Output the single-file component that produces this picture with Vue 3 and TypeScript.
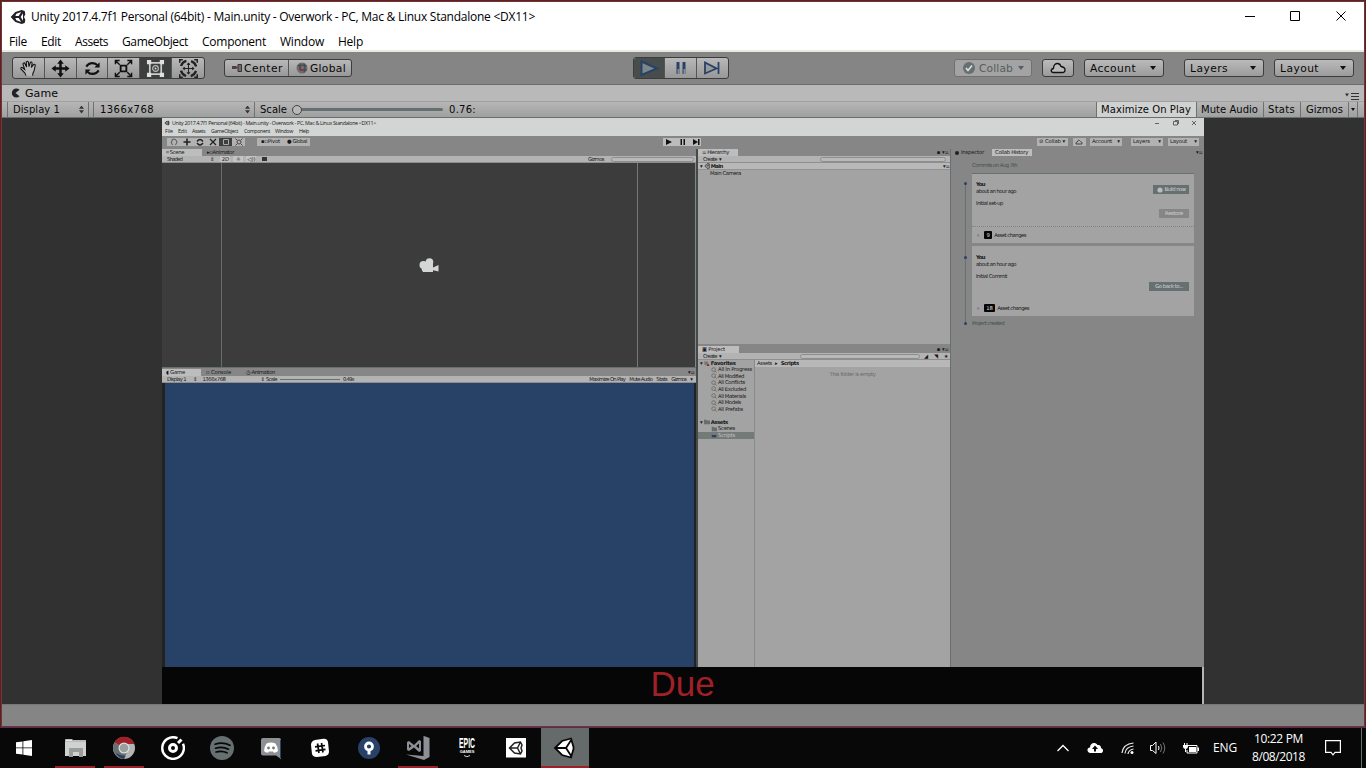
<script setup lang="ts">
import type { Directive } from 'vue'

// Spreads the letters of a label over a given width in pixels.
const vFit: Directive<HTMLElement, number> = {
  mounted(el, binding) {
    const count = (el.textContent ?? '').length
    const natural = el.getBoundingClientRect().width
    if (count > 0) el.style.letterSpacing = `${(binding.value - natural) / count}px`
  }
}

interface Label {
  text: string
  width: number
}

const title = 'Unity 2017.4.7f1 Personal (64bit) - Main.unity - Overwork - PC, Mac & Linux Standalone <DX11>'

const menu: Label[] = [
  { text: 'File', width: 18 },
  { text: 'Edit', width: 20 },
  { text: 'Assets', width: 33 },
  { text: 'GameObject', width: 66 },
  { text: 'Component', width: 64 },
  { text: 'Window', width: 44 },
  { text: 'Help', width: 25 }
]

const innerMenu: Label[] = [
  { text: 'File', width: 8 },
  { text: 'Edit', width: 9 },
  { text: 'Assets', width: 13 },
  { text: 'GameObject', width: 27 },
  { text: 'Component', width: 26 },
  { text: 'Window', width: 18 },
  { text: 'Help', width: 10 }
]

const favorites: Label[] = [
  { text: 'All In Progress', width: 34 },
  { text: 'All Modified', width: 26 },
  { text: 'All Conflicts', width: 27 },
  { text: 'All Excluded', width: 28 },
  { text: 'All Materials', width: 28 },
  { text: 'All Models', width: 23 },
  { text: 'All Prefabs', width: 25 }
]
</script>

<template>
  <div class="desktop">
    <div class="window">
      <header class="titlebar">
        <svg class="logo" viewBox="0 0 24 24"><path d="M1 12 8 4.500 17.500 1.500 22 3 23 8 21 12 23 16 22 21 17.500 22.500 8 19.500ZM8 10.500H13L16.700 4.600 9.500 7ZM8 13.500 9.500 17 16.700 19.400 13 13.500ZM16 12 19.500 17.800V6.200Z" fill="#222" fill-rule="evenodd" /></svg>
        <span v-fit="504" class="title">{{ title }}</span>
        <svg class="wincontrols" viewBox="0 0 102 12" fill="none" stroke="#000"><path d="M0 6.500H10M45.500 1.500H54.500V10.500H45.500ZM91.500 1.500 100.500 10.500M100.500 1.500 91.500 10.500" /></svg>
      </header>
      <nav class="menu">
        <span v-for="m in menu" :key="m.text"><span v-fit="m.width" class="t">{{ m.text }}</span></span>
      </nav>

      <div class="toolbar">
        <div class="tools">
          <span class="tool"><svg viewBox="0 0 20 20" fill="#b8b8b8" stroke="#111" stroke-width="1.100"><path d="M7.500 17.500 6 14.500 2 10.500C1.500 9 3.200 8.500 4.200 9.500L6 11 4.200 5.500C4 4 5.800 3.500 6.300 5L8 8.500 7.700 3.500C7.700 2 9.800 2 10 3.500L10.500 8 11.800 4C12.300 2.600 14 3.200 13.800 4.600L13 9 15.200 6C16.200 5 17.600 6 17 7.200L16 12 14.500 15.500V17.500" /></svg></span>
          <span class="tool"><svg viewBox="0 0 20 20" fill="#111"><path d="M10 .5 13.500 5H11.300V8.700H15V6.500L19.500 10 15 13.500V11.300H11.300V15H13.500L10 19.500 6.500 15H8.700V11.300H5V13.500L.5 10 5 6.500V8.700H8.700V5H6.500Z" /></svg></span>
          <span class="tool"><svg viewBox="0 0 20 20" fill="none" stroke="#111" stroke-width="2.200"><path d="M3.500 8C5 5.500 7 4.300 10 4.300 12 4.300 14 5 15 6.500M16.500 12C15 14.500 13 15.700 10 15.700 8 15.700 6 15 5 13.500" /><path d="M17.500 3.500V9H12ZM2.500 16.500V11H8Z" fill="#111" stroke="none" /></svg></span>
          <span class="tool"><svg viewBox="0 0 20 20"><path d="M7 7H13V13H7Z" fill="none" stroke="#111" stroke-width="2" /><path d="M1.500 5.500V1.500H6M18.500 5.500V1.500H14M1.500 14.500V18.500H6M18.500 14.500V18.500H14M2 2 6 6M18 2 14 6M2 18 6 14M18 18 14 14" fill="none" stroke="#111" stroke-width="1.500" /></svg></span>
          <span class="tool on"><svg viewBox="0 0 20 20"><path d="M4 4H16V16H4Z" fill="none" stroke="#ccc" stroke-width="1.800" /><g fill="#e0e0e0"><path d="M1 1H5.500V5.500H1ZM14.500 1H19V5.500H14.500ZM1 14.500H5.500V19H1ZM14.500 14.500H19V19H14.500Z" /></g><circle cx="10" cy="10" r="3" fill="none" stroke="#bbb" stroke-width="1.200" /><circle cx="10" cy="10" r="1" fill="#ddd" /></svg></span>
          <span class="tool"><svg viewBox="0 0 20 20" fill="none" stroke="#222"><circle cx="10" cy="10" r="8.300" stroke-width="2.400" stroke-dasharray="8 5.040" stroke-dashoffset="-2.520" /><path d="M10 4.500V15.500M4.500 10H15.500M8.500 6 10 4.500 11.500 6M8.500 14 10 15.500 11.500 14M6 8.500 4.500 10 6 11.500M14 8.500 15.500 10 14 11.500" stroke-width="1.100" /><path d="M.8 4V.8H4M16 .8H19.200V4M.8 16V19.200H4M16 19.200H19.200V16" stroke-width="1.600" /></svg></span>
        </div>
        <div class="pivot">
          <span class="half"><svg class="i12" viewBox="0 0 12 12"><path d="M1 4H5V7H1Z" fill="#444" /><path d="M7 2.500H10.500V9.500H7Z" fill="#667070" stroke="#333" /><circle cx="5.500" cy="5.500" r="1.200" fill="#a02028" /></svg><span v-fit="39" class="u">Center</span></span>
          <span class="half"><svg class="i12" viewBox="0 0 12 12"><circle cx="6" cy="6" r="5.500" fill="#667070" /><path d="M4 1.500V8H11M1.500 4Q6 2 10.500 4M8 1.500Q10 6 8 10.500" fill="none" stroke="#444" /><path d="M4 4V8H8" fill="none" stroke="#a02028" /></svg><span v-fit="36" class="u">Global</span></span>
        </div>
        <div class="play">
          <span class="on dark"><svg viewBox="0 0 20 16" fill="#7d8788" stroke="#284166" stroke-width="2"><path d="M2.500 1.500 18 8.500 2.500 15Z" /></svg></span>
          <span><svg viewBox="0 0 20 16" fill="#284166"><path d="M5.500 2H8.500V14H5.500ZM11.500 2H14.500V14H11.500Z" /><path d="M6.500 9H8.500V14H6.500ZM12.500 9H14.500V14H12.500Z" fill="#8a8e93" /></svg></span>
          <span><svg viewBox="0 0 20 16" fill="#999" stroke="#284166" stroke-width="1.800"><path d="M3 2.500V13.500L14.500 8.500ZM16.500 2V14" /></svg></span>
        </div>
        <div class="account">
          <span class="btn collab"><svg class="i12" viewBox="0 0 12 12"><circle cx="6" cy="6" r="6" fill="#667070" /><path d="M3 6 5 8.500 9 3.500" fill="none" stroke="#ddd" stroke-width="1.700" /></svg><span v-fit="34" class="u">Collab</span><i class="caret"></i></span>
          <span class="btn cloud"><svg viewBox="0 0 16 14"><path d="M3.500 11.500C.5 11.500.5 8 3.500 7.500 3.500 4 5.500 2.500 7.500 2.500S10.500 4 11 5.500C14 6 15 7.500 15 9S14 11.500 12.500 11.500Z" fill="#bbb" stroke="#111" stroke-width="1.300" /></svg></span>
          <span class="btn acc"><span v-fit="46" class="u">Account</span><i class="caret"></i></span>
          <span class="btn layers"><span v-fit="38" class="u">Layers</span><i class="caret"></i></span>
          <span class="btn layout"><span v-fit="39" class="u">Layout</span><i class="caret"></i></span>
        </div>
      </div>

      <div class="tabs">
        <svg class="pac" viewBox="0 0 10 10"><path d="M8.500 1.800A4.500 4.500 0 1 0 8.500 8.200L4.500 5Z" fill="#222" /></svg>
        <span v-fit="33" class="u">Game</span>
        <svg class="opts" viewBox="0 0 14 8" fill="#333"><path d="M0 1.500H4L2 4.500ZM6 1H14V2H6ZM6 4H14V5H6ZM6 7H14V8H6Z" /></svg>
      </div>

      <div class="gamebar">
        <span class="cell display"><span v-fit="47" class="u">Display 1</span><i class="updown"></i></span>
        <span class="cell res"><span v-fit="54" class="u">1366x768</span><i class="updown"></i></span>
        <span class="cell scale"><span v-fit="27" class="u">Scale</span><i class="slider"><b></b></i><span v-fit="27" class="u">0.76:</span></span>
        <span class="cell max"><span v-fit="90" class="u">Maximize On Play</span></span>
        <span class="cell mute"><span v-fit="57" class="u">Mute Audio</span></span>
        <span class="cell stats"><span v-fit="27" class="u">Stats</span></span>
        <span class="cell giz"><span v-fit="37" class="u">Gizmos</span></span>
        <span class="cell gcaret"><i class="caret"></i></span>
      </div>

      <main class="view">
        <div class="inner">
          <div class="i-title">
            <svg viewBox="0 0 24 24"><path d="M2 12 10 4 20 3 22 12 20 21 10 20ZM7 11H13L17 5ZM7 13 17 19 13 13Z" fill="#444" fill-rule="evenodd" /></svg>
            <span v-fit="204" class="n">{{ title }}</span>
            <svg class="i-controls" viewBox="0 0 42 6" fill="none" stroke="#555"><path d="M0 3.500H4M18.500 1.500H22.500V5H18.500ZM20 .5H23.500V4M37 1 41 5M41 1 37 5" stroke-width=".9" /></svg>
          </div>
          <div class="i-menu"><span v-for="m in innerMenu" :key="m.text"><span v-fit="m.width" class="n">{{ m.text }}</span></span></div>
          <div class="i-toolbar">
            <div class="i-tools">
              <span><svg viewBox="0 0 8 8" fill="none" stroke="#555"><path d="M2.500 7 1 4 2 3.500V1.500L4 1 6 2 7 4 5.500 7" /></svg></span>
              <span><svg viewBox="0 0 8 8" stroke="#222" stroke-width="1.600"><path d="M4 .5V7.500M.5 4H7.500" /></svg></span>
              <span><svg viewBox="0 0 8 8" fill="none" stroke="#222" stroke-width="1.300"><path d="M1 3.500Q4-.5 7 3.500M1 5Q4 9 7 5" /></svg></span>
              <span><svg viewBox="0 0 8 8" stroke="#222" stroke-width="1.300"><path d="M1 1 7 7M7 1 1 7" /></svg></span>
              <span class="on"><svg viewBox="0 0 8 8" fill="none" stroke="#aaa"><path d="M1.500 1.500H6.500V6.500H1.500Z" /></svg></span>
              <span><svg viewBox="0 0 8 8" fill="none" stroke="#444"><circle cx="4" cy="4" r="2" /><path d="M.5.5 2 2M7.500.5 6 2M.5 7.500 2 6M7.500 7.500 6 6" /></svg></span>
            </div>
            <div class="i-pivot"><span v-fit="19" class="n">▪▫Pivot</span><span v-fit="20" class="n">● Global</span></div>
            <svg class="i-play" viewBox="0 0 38 8"><path d="M0 0H38V8H0Z" fill="#bcbcbc" /><path d="M3 1 9 4 3 7ZM17.500 1H19V7H17.500ZM20.500 1H22V7H20.500ZM30 1 35 4 30 7ZM35 1H36.500V7H35Z" fill="#111" /></svg>
            <div class="i-buttons">
              <span class="b1"><span v-fit="26" class="n">⊘ Collab ▾</span></span>
              <span class="b2"><svg viewBox="0 0 8 6" fill="none" stroke="#444"><path d="M1 5Q.5 3 2.500 3 3-.5 5.500 2.500 7.500 3 7 5Z" /></svg></span>
              <span class="b3"><span v-fit="20" class="n">Account</span><span class="n">▾</span></span>
              <span class="b4"><span v-fit="17" class="n">Layers</span><span class="n">▾</span></span>
              <span class="b5"><span v-fit="17" class="n">Layout</span><span class="n">▾</span></span>
            </div>
          </div>

          <div class="i-body">
            <section class="left">
              <div class="i-tabs"><span class="tab scene"><span v-fit="18" class="n">⌗ Scene</span></span><span class="tab off"><span v-fit="27" class="n">▸▫Animator</span></span></div>
              <div class="i-bar shade"><span v-fit="15" class="n">Shaded</span><span class="c n">⇕</span><span class="chip n">2D</span><span class="chip n">☼</span><span class="chip n">◁))</span><span class="pic"></span><span v-fit="16" class="n gz">Gizmos</span><span class="search sa"></span></div>
              <div class="scene-view">
                <svg viewBox="0 0 20 14" fill="#d3d6d4"><circle cx="4.500" cy="7" r="4" /><circle cx="10.500" cy="4" r="3.800" /><path d="M4 5H14V14H4Q2 12 3 9ZM13 10 19.500 7V13.500L13 12Z" /></svg>
              </div>
              <div class="i-tabs low"><span class="tab game"><span v-fit="19" class="n">◖ Game</span></span><span class="tab off2"><span v-fit="25" class="n">▫ Console</span></span><span class="tab off3"><span v-fit="29" class="n">◷ Animation</span></span><span class="n end">▾≡</span></div>
              <div class="i-bar gbar">
                <span v-fit="19" class="n">Display 1</span><span class="n a">⇕</span><span v-fit="23" class="n">1366x768</span><span class="n b">⇕</span><span v-fit="11" class="n">Scale</span><i class="track"></i><span v-fit="11" class="n">0.49x</span>
                <span class="push"><span v-fit="36" class="n">Maximize On Play</span></span><span v-fit="23" class="n">Mute Audio</span><span v-fit="11" class="n">Stats</span><span v-fit="15" class="n">Gizmos</span><span class="n">▾</span>
              </div>
              <div class="blue"></div>
            </section>

            <section class="middle">
              <div class="i-tabs"><span class="tab hier"><span v-fit="27" class="n">≡ Hierarchy</span></span><span class="n end">▪ ▾≡</span></div>
              <div class="i-bar cr"><span v-fit="14" class="n">Create</span><span class="n">▾</span><span class="search sb"></span></div>
              <div class="main-row n"><span>▾</span><svg viewBox="0 0 8 8"><path d="M1 4 4 1H7V7H4ZM3 4H5.500V2" fill="none" stroke="#222" /></svg><b v-fit="12">Main</b><span class="far">▾≡</span></div>
              <div class="camera"><span v-fit="31" class="n">Main Camera</span></div>
              <div class="i-tabs proj"><span class="tab pj"><span v-fit="23" class="n">▣ Project</span></span><span class="n end">▪ ▾≡</span></div>
              <div class="i-bar cr"><span v-fit="14" class="n">Create</span><span class="n">▾</span><span class="search sc"></span><span class="n ic">◢</span><span class="n ic">◥</span><span class="n ic">★</span></div>
              <div class="project">
                <div class="tree">
                  <div class="root"><span class="n">▾</span><svg viewBox="0 0 8 8"><path d="M0 2H5L7 7H1Z" fill="#777" /><path d="M4 6H7V8H4Z" fill="#a02028" /></svg><b v-fit="25" class="n">Favorites</b></div>
                  <div v-for="f in favorites" :key="f.text" class="leaf"><svg viewBox="0 0 8 8" fill="none" stroke="#666"><circle cx="3.500" cy="3.500" r="2.500" /><path d="M5 5 7.500 7.500" /></svg><span v-fit="f.width" class="n">{{ f.text }}</span></div>
                  <div class="root assets"><span class="n">▾</span><svg viewBox="0 0 8 8"><path d="M0 1H3L4 2H8V7H0Z" fill="#666e6b" /></svg><b v-fit="17" class="n">Assets</b></div>
                  <div class="leaf"><svg viewBox="0 0 8 8"><path d="M1 1H3L4 2H8V7H1Z" fill="#666e6b" /></svg><span v-fit="17" class="n">Scenes</span></div>
                  <div class="leaf sel"><svg viewBox="0 0 8 8"><path d="M1 4H7V7H1Z" fill="#284166" /></svg><span v-fit="17" class="n">Scripts</span></div>
                </div>
                <div class="folder">
                  <div class="crumb"><span v-fit="15" class="n">Assets</span><span class="n">▸</span><b v-fit="18" class="n">Scripts</b></div>
                  <div class="empty"><span v-fit="46" class="n">This folder is empty</span></div>
                </div>
              </div>
            </section>

            <section class="right">
              <div class="i-tabs rt"><span class="dot"></span><span v-fit="23" class="n">Inspector</span><span class="tab ch"><span v-fit="33" class="n">Collab History</span></span><span class="n end">▾≡</span></div>
              <div class="commits"><span v-fit="45" class="n">Commits on Aug 7th</span></div>
              <div class="history">
                <div class="rail"><i></i><i></i><i></i></div>
                <div class="cards">
                  <article class="card">
                    <div class="txt"><b v-fit="9" class="n">You</b><span v-fit="40" class="n">about an hour ago</span><span v-fit="27" class="n gap">Initial set-up</span></div>
                    <div class="acts"><span class="act"><svg viewBox="0 0 6 6"><circle cx="3" cy="3" r="2.600" fill="#b8bcba" /></svg><span v-fit="21" class="n">Build now</span></span><span class="act dim"><span v-fit="18" class="n">Restore</span></span></div>
                    <div class="foot"><span class="n">›</span><span class="count n">9</span><span v-fit="32" class="n">Asset changes</span></div>
                  </article>
                  <article class="card two">
                    <div class="txt"><b v-fit="9" class="n">You</b><span v-fit="40" class="n">about an hour ago</span><span v-fit="31" class="n gap">Initial Commit</span></div>
                    <div class="acts"><span class="act wide"><span v-fit="28" class="n">Go back to...</span></span></div>
                    <div class="foot"><span class="n">›</span><span class="count n">18</span><span v-fit="32" class="n">Asset changes</span></div>
                  </article>
                  <div class="created"><span v-fit="32" class="n">Project created</span></div>
                </div>
              </div>
            </section>
          </div>
          <div class="due">Due</div>
        </div>
      </main>
      <footer class="status"></footer>
    </div>

    <div class="taskbar">
      <span class="slot first"><svg viewBox="0 0 16 16" fill="#fff"><path d="M0 2.300 6.500 1.400V7.500H0ZM7.300 1.300 16 0V7.500H7.300ZM0 8.300H6.500V14.600L0 13.700ZM7.300 8.300H16V16L7.300 14.700Z" /></svg></span>
      <span class="slot run"><svg viewBox="0 0 24 24"><path d="M2 4Q2 3 3 3H9L10 4H23V20H2Z" fill="#b9bcba" /><path d="M3 4H9V5H3Z" fill="#e8e8e8" /><path d="M2 6H23V20H2Z" fill="#d0d2d1" /><path d="M6 13Q6 12 7 12H19Q20 12 20 13V21H16V16H10V21H6Z" fill="#999e9c" /></svg></span>
      <span class="slot run"><svg viewBox="0 0 24 24"><circle cx="12" cy="12" r="11" fill="#b3b5b4" /><path d="M12 12 2.500 6.500A11 11 0 0 1 22.500 8H12Z" fill="#a02028" /><path d="M12 12 2.500 6.500A11 11 0 0 0 12 23L16 14Z" fill="#667070" /><path d="M4 17A11 11 0 0 0 12 23L13.500 20Q8 19.500 4 17Z" fill="#284166" /><circle cx="12" cy="12" r="5.500" fill="#ddd" /><circle cx="12" cy="12" r="4.300" fill="#999e9d" /></svg></span>
      <span class="slot"><svg viewBox="0 0 24 24" fill="none" stroke="#fff"><path d="M16.500 2.200A10.800 10.800 0 1 0 22 7.800" stroke-width="2.400" /><circle cx="12" cy="12" r="5.800" stroke="#080808" stroke-width="2" /><path d="M17 7 20.500 3.500" stroke-width="3" /><circle cx="12" cy="12" r="3.500" stroke-width="3" /></svg></span>
      <span class="slot"><svg viewBox="0 0 24 24"><circle cx="12" cy="12" r="12" fill="#667070" /><path d="M5 8.200Q13 5.800 20 9.300M5.500 12.200Q12.500 10 18.500 13.200M6 16Q12 14.300 17 16.800" fill="none" stroke="#080808" stroke-width="1.700" stroke-linecap="round" /></svg></span>
      <span class="slot"><svg viewBox="0 0 24 24"><path d="M4 2H20Q22 2 22 4V23L17 19.500H4Q2 19.500 2 17.500V4Q2 2 4 2Z" fill="#8d9195" /><path d="M21.500 4V22" stroke="#284166" /><path d="M7.500 7.500Q12 5.500 16.500 7.500 19 11 19 15 17 17 15 16.800L14 15.500H10L9 16.800Q6 16.500 5 15 5 11 7.500 7.500Z" fill="#fff" /><circle cx="9.500" cy="12" r="1.400" fill="#777" /><circle cx="14.500" cy="12" r="1.400" fill="#777" /></svg></span>
      <span class="slot"><svg viewBox="0 0 24 24"><path d="M7 4 15.500 2.800Q19 2.500 20 6L21 15.500Q21 19 17.500 20L9 21Q5 21.200 4 18L3 9Q3 5 7 4Z" fill="#fff" /><path d="M9.500 7.500 11 17M13.500 7 15 16.500M7 10.800 17 9.500M7.500 14.800 17.500 13.300" stroke="#080808" stroke-width="1.700" /></svg></span>
      <span class="slot"><svg viewBox="0 0 24 24"><circle cx="12" cy="12" r="11" fill="#284166" /><circle cx="12" cy="10.500" r="3.500" fill="none" stroke="#fff" stroke-width="2.800" /><path d="M10.500 13H13.500V18.500H10.500Z" fill="#fff" /></svg></span>
      <span class="slot run"><svg viewBox="0 0 24 24" fill="#8c9096"><path d="M18 0 23.500 2V21L18 24 0 18.500 17.500 20V0Z" /><path d="M1 6 3 5 8 9 13 4 15 5V15L13 16 8 11.500 3 15 1 14ZM3 8V12L5.500 10ZM10 10 13 12.500V7.500Z" fill-rule="evenodd" /></svg></span>
      <span class="slot epic"><b>EPIC</b><small>GAMES</small><svg viewBox="0 0 8 3" fill="none" stroke="#ccc"><path d="M1 .5Q4 3 7 .5" /></svg></span>
      <span class="slot"><svg viewBox="0 0 24 24"><path d="M2 2H22V21.500H2Z" fill="#fff" /><path d="M5.500 12 10.500 7 16.500 6 18 9 17 12 18 15 16.500 18 10.500 17ZM5.500 12H13.500M13.500 12 16.500 6M13.500 12 16.500 18" fill="none" stroke="#222" stroke-width="1.500" /></svg></span>
      <span class="slot active"><svg viewBox="0 0 24 24"><path d="M2 12 9 5 18 2.500 21 11V13L18 21.500 9 19Z" fill="#fff" /><path d="M2 12 9 5 18 2.500 20.500 11V13L18 21.500 9 19ZM3 12H13M13 12 18.500 3.500M13 12 18.500 20.500" fill="none" stroke="#080808" stroke-width="1.800" /></svg></span>

      <div class="tray">
        <svg class="chev" viewBox="0 0 12 8" fill="none" stroke="#fff" stroke-width="1.300"><path d="M.5 7 6 1.500 11.500 7" /></svg>
        <svg class="tcloud" viewBox="0 0 16 12"><path d="M3.500 11C-.5 11-.5 5.500 3 5.500 3 1 8-.5 10.500 3 14 3 14 5 14 6 17 7 16.500 11 13.500 11Z" fill="#fff" /><path d="M8 3.500 11 7H9V9.500H7V7H5Z" fill="#080808" /></svg>
        <svg class="wifi" viewBox="0 0 14 14" fill="none" stroke="#eee" stroke-width="1.200"><path d="M1 12Q2 3 12.500 2M4 12.500Q4.500 6 12.500 5M7 13Q7.500 9 12.500 8" /><circle cx="11" cy="11.500" r="1.500" fill="#fff" stroke="none" /></svg>
        <svg class="sound" viewBox="0 0 16 14" fill="none" stroke="#fff"><path d="M.5 4.500H2.500L6 1V12.500L2.500 9.500H.5Z" /><path d="M8.500 5Q9.500 7 8.500 9" /><path d="M10.500 3Q13 7 10.500 11M13 1.500Q16.500 7 13 12.500" stroke="#777" /></svg>
        <svg class="batt" viewBox="0 0 16 12"><path d="M5 3.500H14V11H4V8" fill="none" stroke="#fff" /><path d="M6 5H13V10H6ZM14.500 5.500H16V9H14.500ZM0 3H5V5Q4.500 7 2.500 7T0 5ZM1 1H2V3H1ZM3.500 1H4.500V3H3.500ZM2 7H3V10H2Z" fill="#fff" /></svg>
        <span class="eng"><span v-fit="24" class="t">ENG</span></span>
        <div class="clock"><span v-fit="49" class="t">10:22 PM</span><span v-fit="53" class="t">8/08/2018</span></div>
        <svg class="note" viewBox="0 0 16 16" fill="none" stroke="#fff" stroke-width="1.200"><path d="M.6.600H15.400V12.400H10L8 14.800 6 12.400H.6Z" /></svg>
        <i class="peek"></i>
      </div>
    </div>
  </div>
</template>

<style>
body { margin: 0; overflow: hidden; background: #080808; }
</style>

<style scoped>
* { box-sizing: border-box; }
svg { display: block; flex: none; }
i { font-style: normal; }
.desktop { width: 1366px; height: 768px; background: #080808; display: flex; flex-direction: column; overflow: hidden; color: #000; }
.window { height: 728px; border: 1px solid #284166; border-top-color: #333; border-left-color: #333; border-right-color: #333; display: flex; flex-direction: column; background: #fff; position: relative; }
.window::after { content: ""; position: absolute; inset: 0; border: 1px solid #a02028; pointer-events: none; }
.t, .title { display: inline-block; white-space: nowrap; font: 12px/18px "Open Sans", sans-serif; }
.u { display: inline-block; flex: none; white-space: nowrap; font: 11px/16px "DejaVu Sans", sans-serif; color: #080808; }
.n { display: inline-block; flex: none; white-space: nowrap; font-family: "DejaVu Sans", sans-serif; font-size: 5.300px; line-height: 7px; color: #181818; }

.titlebar { height: 31px; display: flex; align-items: center; padding-left: 9px; flex: none; }
.logo { width: 16px; height: 16px; margin-right: 5px; }
.title { line-height: 20px; }
.wincontrols { width: 102px; height: 12px; margin-left: auto; margin-right: 18px; margin-bottom: 1px; }
.menu { height: 18px; flex: none; display: grid; grid-template-columns: 32px 34px 47px 80px 78px 58px 40px; padding-left: 8px; }
.menu .t { line-height: 19px; }

.toolbar { height: 35px; flex: none; border-top: 2px solid #e8eadf; border-bottom: 1px solid #667070; background: #858585; display: flex; align-items: flex-start; padding-left: 11px; }
.tools, .pivot, .play { display: flex; border: 1px solid #3c3c3c; border-radius: 3px; background: linear-gradient(#b8b8b8, #989898); overflow: hidden; }
.tools { width: 193px; height: 22px; margin-top: 5px; }
.tool { width: 32px; display: flex; align-items: center; justify-content: center; border-right: 1px solid #555; }
.tool:last-child { border: 0; }
.tool svg { width: 19px; height: 19px; }
.on { background: #3d3f3f; }
.dark { background: #474d4d; }
.pivot { width: 128px; height: 18px; margin: 7px 0 0 19px; }
.pivot .u, .btn .u { font-size: 10.700px; line-height: 17px; }
.half { width: 64px; display: flex; align-items: center; padding-left: 6px; }
.half + .half { border-left: 1px solid #555; width: 64px; padding-left: 7px; }
.i12 { width: 12px; height: 12px; margin-right: 1px; }
.half + .half .i12 { margin-right: 2px; }
.play { width: 96px; height: 22px; margin: 5px 0 0 281px; }
.play span { width: 32px; display: flex; align-items: center; justify-content: center; border-right: 1px solid #555; }
.play span:last-child { border: 0; }
.play svg { width: 20px; height: 16px; }
.account { display: flex; margin: 7px 11px 0 auto; }
.btn { height: 18px; border: 1px solid #3c3c3c; border-radius: 3px; background: linear-gradient(#bbb, #9b9b9b); display: flex; align-items: center; padding: 0 7px 0 5px; }
.caret { width: 0; height: 0; border: 3px solid transparent; border-top: 4px solid #111; border-bottom: 0; margin-left: auto; }
.collab { width: 78px; margin-right: 10px; border-color: #707070; background: #a3a3a3; padding-left: 8px; }
.collab .i12 { margin-right: 4px; }
.collab .u { color: #555e5e; }
.collab .caret { border-top-color: #555e5e; }
.cloud { width: 32px; margin-right: 10px; padding-left: 7px; }
.cloud svg { width: 16px; height: 14px; }
.acc { width: 80px; margin-right: 20px; }
.layers { width: 80px; margin-right: 10px; }
.layout { width: 80px; }

.tabs { height: 16px; flex: none; background: #b9b9b9; display: flex; align-items: center; padding: 0 6px 0 10px; }
.tabs .u { padding-top: 1px; margin-left: 1px; }
.pac { width: 10px; height: 10px; margin-right: 3px; }
.opts { width: 14px; height: 8px; margin-left: auto; margin-top: 6px; }
.gamebar { height: 17px; flex: none; border-top: 1px solid #a0a0a0; border-bottom: 1px solid #667070; background: linear-gradient(#b6b6b6, #a0a0a0); display: flex; padding: 0 7px 0 5px; }
.cell { display: flex; align-items: center; border-left: 1px solid #6d7271; }
.cell .u { font-size: 10px; line-height: 14px; }
.updown { width: 5px; height: 8px; background: linear-gradient(#333, #333); clip-path: polygon(0 40%, 50% 0, 100% 40%, 100% 40%, 0 40%, 0 60%, 100% 60%, 50% 100%, 0 60%); margin-left: auto; margin-right: 4px; }
.display { width: 82px; padding-left: 5px; border-right: 1px solid #6d7271; margin-left: 1px; }
.res { width: 161px; padding-left: 6px; margin-left: 4px; }
.scale { padding-left: 5px; }
.slider { width: 151px; height: 3px; background: #667070; border-radius: 2px; margin: 0 6px 0 5px; display: flex; align-items: center; }
.slider b { width: 10px; height: 10px; flex: none; border: 1px solid #444; border-radius: 50%; background: #b8b8b8; }
.max { width: 100px; margin-left: auto; padding-left: 4px; background: #d0d2d1; }
.mute { width: 67px; padding-left: 4px; }
.stats { width: 37px; padding-left: 4px; }
.giz { width: 48px; padding-left: 5px; }
.gcaret { width: 10px; border-right: 1px solid #6d7271; padding-right: 2px; }
.gcaret .caret { border-width: 3px 2px 0; }

.view { height: 586px; flex: none; background: #313131; display: flex; padding-left: 161px; }
.inner { width: 1042px; display: flex; flex-direction: column; background: #868686; overflow: hidden; }
.i-title { height: 10px; flex: none; background: #d2d5d3; display: flex; align-items: center; padding-left: 2px; }
.i-title svg { width: 6px; height: 6px; margin-right: 2px; }
.i-title .n, .i-menu .n { font-family: "Open Sans", sans-serif; }
.i-title .i-controls { width: 42px; height: 6px; margin-left: auto; margin-right: 7px; }
.i-menu { height: 8px; flex: none; background: #d2d5d3; display: grid; grid-template-columns: 13px 14px 19px 33px 31px 24px 20px; padding-left: 3px; }
.i-menu > span { display: flex; }
.i-toolbar { height: 13px; flex: none; display: flex; padding: 2px 5px 0; }
.i-tools { display: flex; width: 78px; height: 8px; background: #b2b2b2; }
.i-tools span { width: 13px; display: flex; justify-content: center; }
.i-tools svg { width: 8px; height: 8px; }
.i-pivot { width: 53px; height: 8px; margin-left: 12px; background: #b2b2b2; display: flex; gap: 7px; padding-left: 4px; }
.i-play { width: 38px; height: 8px; margin-left: 353px; }
.i-buttons { display: flex; margin-left: auto; }
.i-buttons > span { height: 8px; background: #b2b2b2; display: flex; justify-content: space-between; padding: 0 2px; }
.b1 { width: 31px; margin-right: 5px; }
.b2 { width: 13px; margin-right: 4px; }
.b2 svg { width: 8px; height: 6px; margin-top: 1px; }
.b3 { width: 32px; margin-right: 9px; }
.b4 { width: 32px; margin-right: 5px; }
.b5 { width: 31px; }
.i-body { height: 518px; flex: none; display: flex; }
.left { width: 534px; display: flex; flex-direction: column; }
.middle { width: 255px; border-left: 2px solid #444a49; border-right: 1px solid #667070; background: #a3a3a3; display: flex; flex-direction: column; }
.right { width: 253px; display: flex; flex-direction: column; }
.i-tabs { height: 7px; flex: none; display: flex; background: #868686; align-items: center; }
.tab { height: 7px; display: flex; align-items: center; }
.scene, .game, .hier, .pj, .ch { background: #bdbdbd; }
.scene { width: 40px; padding-left: 4px; }
.off { padding-left: 5px; }
.i-bar { height: 7px; flex: none; background: #b3b3b3; display: flex; align-items: center; border-bottom: 1px solid #8e8e8e; }
.shade { padding-left: 5px; }
.c { margin-left: 28px; margin-right: 6px; }
.chip { width: 10px; background: #c4c4c4; margin-right: 3px; text-align: center; line-height: 6px; }
.pic { width: 5px; height: 4px; background: #333; margin-left: 3px; }
.gz { margin-left: auto; margin-right: 7px; }
.search { height: 5px; border: 1px solid #8d8d8d; border-radius: 3px; background: #b9b9b9; }
.sa { width: 83px; margin-right: 2px; }
.scene-view { height: 204px; flex: none; margin-right: 1px; background: linear-gradient(90deg, transparent 59px, #686b6a 59px, #686b6a 60px, transparent 60px, transparent 475px, #777 475px, #777 476px, transparent 476px), #3c3c3c; display: flex; align-items: center; justify-content: center; }
.scene-view svg { width: 20px; height: 14px; margin-left: 1px; }
.low { height: 9px; border-top: 1px solid #667070; }
.game { width: 39px; padding-left: 4px; }
.off2 { padding-left: 5px; }
.off3 { padding-left: 15px; }
.gbar { padding: 0 3px 0 5px; }
.gbar .a { margin: 0 5px 0 7px; }
.gbar .b { margin: 0 1px 0 35px; }
.track { width: 60px; height: 1px; background: #667070; margin: 0 3px; }
.push { margin-left: auto; display: flex; }
.gbar .push ~ .n { margin-left: 4px; }
.blue { flex: 1; border: solid #222; border-width: 0 2px 0 3px; background: #284166; }

.hier { width: 40px; padding-left: 4px; }
.end { margin-left: auto; margin-right: 1px; }
.cr { padding-left: 5px; }
.cr .n + .n { margin-left: 2px; }
.sb { width: 126px; margin-left: auto; margin-right: 4px; }
.main-row { height: 7px; background: #b8b8b8; display: flex; align-items: center; padding-left: 2px; border-bottom: 1px solid #929292; }
.main-row svg { width: 6px; height: 6px; margin: 0 1px; }
.far { margin-left: auto; }
.camera { height: 174px; flex: none; padding-left: 12px; display: flex; }
.proj { height: 9px; border-top: 2px solid #868686; }
.pj { width: 41px; padding-left: 4px; }
.sc { width: 120px; margin-left: auto; margin-right: 2px; }
.ic { width: 8px; text-align: center; }
.project { flex: 1; display: flex; }
.tree { width: 57px; border-right: 1px solid #868a88; }
.root, .leaf { display: flex; align-items: center; height: 6.550px; }
.root { padding-left: 2px; }
.root svg, .leaf svg { width: 6px; height: 6px; margin-right: 1px; }
.root svg { margin-left: 1px; }
.leaf { padding-left: 13px; }
.assets { margin-top: 6.500px; }
.sel { background: #747a78; }
.sel .n { color: #c4c7c5; }
.folder { flex: 1; }
.crumb { height: 7px; background: #b8b8b8; display: flex; gap: 3px; padding-left: 2px; }
.empty { height: 14px; display: flex; justify-content: center; align-items: center; }
.empty .n { color: #686868; }

.rt { padding-left: 4px; }
.dot { width: 4px; height: 4px; border-radius: 50%; background: #222; margin-right: 2px; }
.ch { width: 40px; margin-left: 8px; padding-left: 3px; }
.commits { height: 17px; flex: none; padding: 6px 0 0 21px; display: flex; }
.commits .n, .created .n { color: #43504c; }
.history { display: flex; }
.rail { width: 9px; margin: 9px 2px 0 10px; height: 143px; display: flex; flex-direction: column; justify-content: space-between; align-items: center; background: linear-gradient(90deg, transparent 4px, #667070 4px, #667070 5px, transparent 5px); }
.rail i { width: 3px; height: 3px; border-radius: 50%; background: #284166; }
.rail i:nth-child(2) { margin-top: 8px; }
.cards { width: 222px; }
.card { height: 70px; background: #a3a3a3; border-top: 1px solid #667070; display: grid; grid-template-columns: 1fr 60px; grid-template-rows: 52px 17px; margin-bottom: 3px; }
.txt { padding: 7px 0 0 4px; display: flex; flex-direction: column; align-items: flex-start; }
.gap { margin-top: 5px; }
.acts { padding: 11px 5px 0 0; display: flex; flex-direction: column; align-items: flex-end; }
.act { width: 36px; height: 9px; background: #667070; display: flex; align-items: center; justify-content: center; gap: 2px; }
.act .n { color: #d0d2d1; }
.act svg { width: 6px; height: 6px; }
.dim { width: 30px; background: #868686; margin-top: 15px; }
.wide { width: 40px; margin-top: 24px; }
.foot { grid-column: 1 / 3; border-top: 1px dotted #7d8180; display: flex; align-items: center; padding-left: 5px; }
.two .foot { border-color: transparent; }
.two { border-color: #a3a3a3; }
.count { background: #060606; color: #ddd; min-width: 8px; height: 8px; line-height: 8px; border-radius: 1px; text-align: center; margin: 0 2px 0 5px; padding: 0 1px; }
.two .count { min-width: 11px; }
.created { margin-top: 4px; display: flex; }
.due { height: 37px; flex: none; background: #060606; border-right: 2px solid #b5b5b5; text-align: center; padding-left: 1px; font: 35px/34px "Liberation Sans", sans-serif; color: #a02028; }
.status { flex: 1; background: #858585; border-top: 1px solid #777; }

.taskbar { height: 40px; display: flex; color: #fff; }
.slot { width: 48px; height: 40px; margin-right: 1px; display: flex; align-items: center; justify-content: center; flex: none; }
.slot svg { width: 24px; height: 24px; }
.first { margin-right: 3px; }
.slot.first svg { width: 16px; height: 16px; }
.run { background: linear-gradient(#a02028, #a02028) center bottom / 40px 2px no-repeat; }
.active { background: linear-gradient(#a02028, #a02028) center bottom / 48px 2px no-repeat, #646b6a; }
.epic { flex-direction: column; font-family: "Liberation Sans", sans-serif; }
.epic b { font-size: 12px; line-height: 10px; transform: scale(.57, 1.150); }
.epic small { font-size: 4px; font-weight: bold; line-height: 7px; }
.slot.epic svg { width: 8px; height: 3px; }
.tray { margin-left: auto; display: flex; align-items: center; height: 40px; }
.chev { width: 12px; height: 8px; margin-right: 18px; }
.tcloud { width: 16px; height: 12px; margin-right: 18px; }
.wifi { width: 14px; height: 14px; margin-right: 15px; }
.sound { width: 16px; height: 14px; margin-right: 17px; }
.batt { width: 16px; height: 12px; margin-right: 14px; }
.eng { width: 24px; margin-right: 15px; margin-bottom: 2px; }
.clock { width: 53px; margin-right: 20px; display: flex; flex-direction: column; align-items: center; }
.clock .t { line-height: 18px; }
.note { width: 16px; height: 16px; margin-right: 20px; }
.peek { width: 1px; height: 40px; background: #667070; margin-right: 4px; }
</style>
